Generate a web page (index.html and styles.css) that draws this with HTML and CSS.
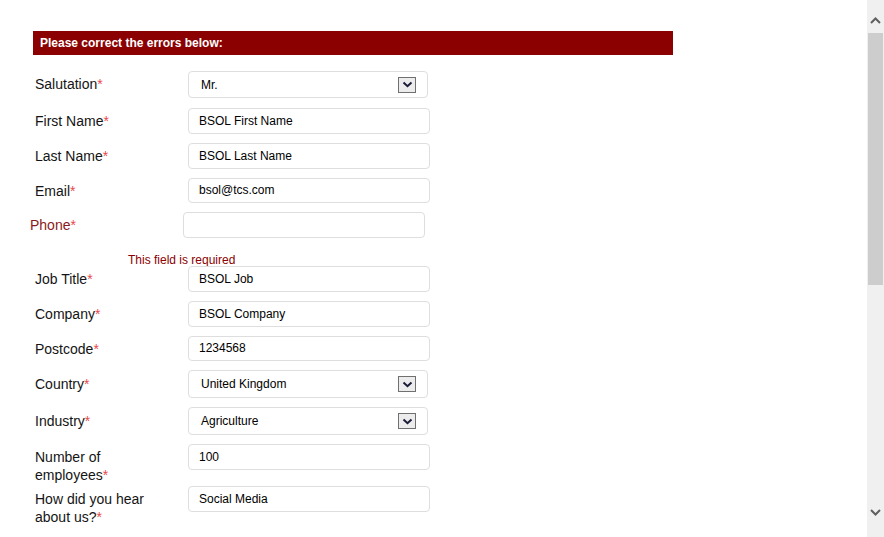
FILE: index.html
```html
<!DOCTYPE html>
<html>
<head>
<meta charset="utf-8">
<link rel="stylesheet" href="styles.css">
</head>
<body>
<div class="page">
  <main class="main">
    <div class="error-banner">Please correct the errors below:</div>
    <form class="form">
      <div class="row sel-row sal">
        <label class="label">Salutation<span class="req">*</span></label>
        <div class="select"><span>Mr.</span><span class="arrow"><svg width="11" height="7" viewBox="0 0 11 7"><path d="M1.5 1.5 L5.5 5.2 L9.5 1.5" fill="none" stroke="#1b1b3a" stroke-width="2"/></svg></span></div>
      </div>
      <div class="row">
        <label class="label">First Name<span class="req">*</span></label>
        <div class="input">BSOL First Name</div>
      </div>
      <div class="row">
        <label class="label">Last Name<span class="req">*</span></label>
        <div class="input">BSOL Last Name</div>
      </div>
      <div class="row short">
        <label class="label">Email<span class="req">*</span></label>
        <div class="input">bsol@tcs.com</div>
      </div>
      <div class="error-group">
        <div class="row invalid">
          <label class="label">Phone<span class="req">*</span></label>
          <div class="input"></div>
        </div>
        <div class="field-error">This field is required</div>
      </div>
      <div class="row">
        <label class="label">Job Title<span class="req">*</span></label>
        <div class="input">BSOL Job</div>
      </div>
      <div class="row">
        <label class="label">Company<span class="req">*</span></label>
        <div class="input">BSOL Company</div>
      </div>
      <div class="row short">
        <label class="label">Postcode<span class="req">*</span></label>
        <div class="input">1234568</div>
      </div>
      <div class="row sel-row">
        <label class="label">Country<span class="req">*</span></label>
        <div class="select"><span>United Kingdom</span><span class="arrow"><svg width="11" height="7" viewBox="0 0 11 7"><path d="M1.5 1.5 L5.5 5.2 L9.5 1.5" fill="none" stroke="#1b1b3a" stroke-width="2"/></svg></span></div>
      </div>
      <div class="row sel-row">
        <label class="label">Industry<span class="req">*</span></label>
        <div class="select"><span>Agriculture</span><span class="arrow"><svg width="11" height="7" viewBox="0 0 11 7"><path d="M1.5 1.5 L5.5 5.2 L9.5 1.5" fill="none" stroke="#1b1b3a" stroke-width="2"/></svg></span></div>
      </div>
      <div class="row two-line">
        <label class="label">Number of employees<span class="req">*</span></label>
        <div class="input">100</div>
      </div>
      <div class="row two-line">
        <label class="label">How did you hear about us?<span class="req">*</span></label>
        <div class="input">Social Media</div>
      </div>
    </form>
  </main>
  <div class="scrollbar">
    <div class="sb-btn"><svg width="11" height="7" viewBox="0 0 11 7"><path d="M1 6 L5.5 1.5 L10 6" fill="none" stroke="#606060" stroke-width="2"/></svg></div>
    <div class="sb-track">
      <div class="sb-thumb"></div>
    </div>
    <div class="sb-btn sb-down"><svg width="11" height="7" viewBox="0 0 11 7"><path d="M1 1 L5.5 5.5 L10 1" fill="none" stroke="#606060" stroke-width="2"/></svg></div>
  </div>
</div>
</body>
</html>
```
FILE: styles.css
```css
* { box-sizing: border-box; }
html, body { margin: 0; padding: 0; background: #fff; }
body {
  width: 884px;
  height: 537px;
  overflow: hidden;
  font-family: "Liberation Sans", Arial, sans-serif;
}
.page {
  display: flex;
  height: 537px;
}
.main {
  flex: 1;
  padding: 31px 0 0 33px;
}
.error-banner {
  width: 640px;
  height: 24px;
  background: #8b0000;
  color: #fff;
  font-size: 12px;
  font-weight: bold;
  line-height: 24px;
  padding-left: 7px;
}
.form {
  display: flex;
  flex-direction: column;
  gap: 9px;
  margin-top: 16px;
  padding-left: 2px;
}
.row {
  display: grid;
  grid-template-columns: 153px 242px;
  align-items: center;
  height: 26px;
}
.row.short { height: 25px; }
.row.short .input { height: 25px; line-height: 23px; }
.sel-row { height: 28px; }
.sal { height: 28px; align-items: start; }
.sal .select { height: 27px; }
.sal .label { line-height: 27px; }
.label {
  font-size: 14px;
  color: #141414;
  line-height: 18px;
}
.req { color: #e8494c; }
.input {
  height: 26px;
  border: 1px solid #dedede;
  border-radius: 4px;
  font-size: 12px;
  color: #000;
  line-height: 24px;
  padding-left: 10px;
}
.select {
  width: 240px;
  height: 28px;
  border: 1px solid #dedede;
  border-radius: 4px;
  font-size: 12px;
  color: #000;
  display: flex;
  align-items: center;
  justify-content: space-between;
  padding: 0 11px 0 12px;
}
.arrow {
  width: 18px;
  height: 16px;
  background: #ececec;
  border: 1px solid #707070;
  display: flex;
  align-items: center;
  justify-content: center;
}
.error-group {
  display: flex;
  flex-direction: column;
  height: 45px;
}
.invalid {
  margin-left: -5px;
}
.invalid .label { color: #8b1a1a; }
.field-error {
  font-size: 12px;
  color: #8b0000;
  margin: 15px 0 0 93px;
  line-height: 14px;
}
.two-line {
  align-items: start;
  height: auto;
}
.two-line .label {
  padding-top: 4px;
  width: 130px;
}
.two-line + .two-line { margin-top: -7px; }
.scrollbar {
  width: 17px;
  background: #f0f0f0;
  display: flex;
  flex-direction: column;
}
.sb-btn {
  height: 33px;
  display: flex;
  align-items: center;
  justify-content: center;
  padding-top: 8px;
}
.sb-down {
  padding-top: 0;
  padding-bottom: 10px;
  height: 39px;
}
.sb-track {
  flex: 1;
  padding: 0 1px;
}
.sb-thumb {
  height: 252px;
  background: #cdcdcd;
}
```
